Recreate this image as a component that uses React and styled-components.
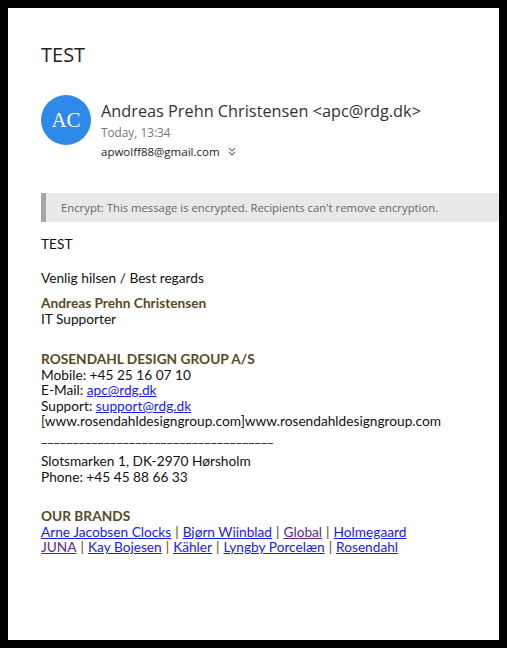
import React from "react";
import styled, { createGlobalStyle } from "styled-components";

const GlobalStyle = createGlobalStyle`
  html, body { background: #000; }
  body { margin: 0; padding: 8px; }
`;

const Card = styled.div`
  background: #fff;
  width: 491px;
  height: 632px;
  overflow: hidden;
  padding-left: 33px;
  box-sizing: border-box;
  font-family: "Open Sans", "Noto Sans", sans-serif;
`;

const Subject = styled.h1`
  margin: 0;
  padding-top: 33px;
  font-size: 20px;
  font-weight: 400;
  line-height: 28px;
  color: #222;
`;

const Header = styled.div`
  display: flex;
  gap: 10px;
  margin-top: 26px;
`;

const Avatar = styled.div`
  width: 50px;
  height: 50px;
  border-radius: 50%;
  background: #2f89e9;
  color: #fff;
  display: flex;
  align-items: center;
  justify-content: center;
  font-family: "Liberation Serif", serif;
  font-size: 21px;
  flex-shrink: 0;
`;

const Meta = styled.div`
  display: flex;
  flex-direction: column;
`;

const From = styled.div`
  font-size: 16.3px;
  line-height: 28px;
  padding-top: 2px;
  color: #333;
`;

const Time = styled.div`
  font-size: 11.8px;
  line-height: 15px;
  color: #777;
`;

const To = styled.div`
  font-size: 11.5px;
  line-height: 23px;
  color: #222;
  display: flex;
  align-items: center;
  gap: 8px;
`;

const Chevron = styled.svg`
  width: 8px;
  height: 9px;
`;

const Notice = styled.div`
  margin-top: 30px;
  background: #e9e9e9;
  border-left: 5px solid #a6a6a6;
  padding: 7px 15px;
  font-size: 11.3px;
  line-height: 15px;
  color: #666;
`;

const Body = styled.div`
  font-family: "Lato", "Open Sans", sans-serif;
  font-size: 13.7px;
  line-height: 15.5px;
  color: #111;
  padding-top: 14px;
`;

const Para = styled.p`
  margin: 0 0 ${p => p.$gap || 0}px;
`;

const Strong = styled.span`
  font-weight: 700;
  color: #5a4827;
`;

const Link = styled.a`
  color: ${p => (p.$visited ? "#5b2a86" : "#1a1aee")};
  text-decoration: underline;
`;

const Sep = styled.span`
  color: #5a4827;
  margin: 0 0.5px;
`;

const brands1 = [
  ["Arne Jacobsen Clocks"],
  ["Bjørn Wiinblad"],
  ["Global", true],
  ["Holmegaard"],
];
const brands2 = [
  ["JUNA", true],
  ["Kay Bojesen"],
  ["Kähler"],
  ["Lyngby Porcelæn"],
  ["Rosendahl"],
];

const BrandLine = ({ items }) => (
  <div>
    {items.map(([name, visited], i) => (
      <React.Fragment key={name}>
        {i > 0 && <Sep> | </Sep>}
        <Link href="#" $visited={visited}>{name}</Link>
      </React.Fragment>
    ))}
  </div>
);

export default function App() {
  return (
    <>
      <GlobalStyle />
      <Card>
        <Subject>TEST</Subject>
        <Header>
          <Avatar>AC</Avatar>
          <Meta>
            <From>Andreas Prehn Christensen &lt;apc@rdg.dk&gt;</From>
            <Time>Today, 13:34</Time>
            <To>
              apwolff88@gmail.com
              <Chevron viewBox="0 0 8 9" fill="none" stroke="#777" strokeWidth="1.1">
                <path d="M1 1l3 3 3-3M1 5l3 3 3-3" />
              </Chevron>
            </To>
          </Meta>
        </Header>
        <Notice>Encrypt: This message is encrypted. Recipients can't remove encryption.</Notice>
        <Body>
          <Para $gap={18}>TEST</Para>
          <Para $gap={10}>Venlig hilsen / Best regards</Para>
          <Para $gap={25}>
            <Strong>Andreas Prehn Christensen</Strong>
            <br />IT Supporter
          </Para>
          <Para $gap={9}>
            <Strong>ROSENDAHL DESIGN GROUP A/S</Strong>
            <br />Mobile: +45 25 16 07 10
            <br />E-Mail: <Link href="#">apc@rdg.dk</Link>
            <br />Support: <Link href="#">support@rdg.dk</Link>
            <br />[www.rosendahldesigngroup.com]www.rosendahldesigngroup.com
            <br />_____________________________________
          </Para>
          <Para $gap={24}>
            Slotsmarken 1, DK-2970 Hørsholm
            <br />Phone: +45 45 88 66 33
          </Para>
          <Para>
            <Strong>OUR BRANDS</Strong>
            <BrandLine items={brands1} />
            <BrandLine items={brands2} />
          </Para>
        </Body>
      </Card>
    </>
  );
}
